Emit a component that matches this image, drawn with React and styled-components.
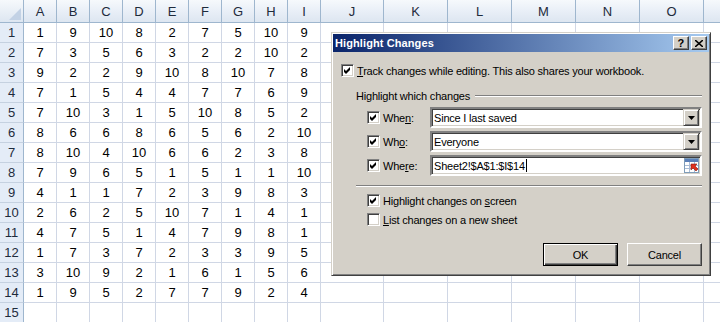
import React from "react";
import styled, { createGlobalStyle } from "styled-components";

const GlobalStyle = createGlobalStyle`
  html, body {
    margin: 0;
    padding: 0;
    background: #ffffff;
    overflow: hidden;
  }
  body {
    font-family: "Liberation Sans", Arial, sans-serif;
  }
`;

const Screen = styled.div`
  position: relative;
  width: 720px;
  height: 322px;
  overflow: hidden;
`;

// ---------- worksheet ----------

const Sheet = styled.div`
  display: grid;
  grid-template-columns: 24px repeat(9, 33px) 63px repeat(6, 64px);
  grid-template-rows: 23px repeat(15, 20px);
  font-family: "Liberation Sans", Arial, sans-serif;
  font-size: 13px;
  color: #000;
`;

const Corner = styled.div`
  position: relative;
  box-sizing: border-box;
  border-right: 1px solid #9eb6ce;
  border-bottom: 1px solid #9eb6ce;
  background: linear-gradient(#f6f9fc, #dde6f1);
  &::after {
    content: "";
    position: absolute;
    right: 2px;
    bottom: 2px;
    width: 0;
    height: 0;
    border-left: 12px solid transparent;
    border-bottom: 12px solid #c3d2e5;
  }
`;

const ColHead = styled.div`
  box-sizing: border-box;
  border-right: 1px solid #9eb6ce;
  border-bottom: 1px solid #9eb6ce;
  background: linear-gradient(#f6f9fc 0%, #e9eff7 50%, #dde6f1 100%);
  color: #1e2b3c;
  display: flex;
  align-items: center;
  justify-content: center;
`;

const RowHead = styled.div`
  box-sizing: border-box;
  border-right: 1px solid #9eb6ce;
  border-bottom: 1px solid #c5d1e0;
  background: #e4ecf7;
  color: #1e2b3c;
  display: flex;
  align-items: center;
  justify-content: center;
`;

const Cell = styled.div`
  box-sizing: border-box;
  border-right: 1px solid #d0d7e5;
  border-bottom: 1px solid #d0d7e5;
  display: flex;
  align-items: center;
  justify-content: center;
`;

// last column is only partly on screen, its letter falls outside the window
const columns = ["A", "B", "C", "D", "E", "F", "G", "H", "I", "J", "K", "L", "M", "N", "O", ""];

const data = [
  [1, 9, 10, 8, 2, 7, 5, 10, 9],
  [7, 3, 5, 6, 3, 2, 2, 10, 2],
  [9, 2, 2, 9, 10, 8, 10, 7, 8],
  [7, 1, 5, 4, 4, 7, 7, 6, 9],
  [7, 10, 3, 1, 5, 10, 8, 5, 2],
  [8, 6, 6, 8, 6, 5, 6, 2, 10],
  [8, 10, 4, 10, 6, 6, 2, 3, 8],
  [7, 9, 6, 5, 1, 5, 1, 1, 10],
  [4, 1, 1, 7, 2, 3, 9, 8, 3],
  [2, 6, 2, 5, 10, 7, 1, 4, 1],
  [4, 7, 5, 1, 4, 7, 9, 8, 1],
  [1, 7, 3, 7, 2, 3, 3, 9, 5],
  [3, 10, 9, 2, 1, 6, 1, 5, 6],
  [1, 9, 5, 2, 7, 7, 9, 2, 4],
  [],
];

// ---------- dialog (classic windows) ----------

const Dialog = styled.div`
  position: absolute;
  left: 331px;
  top: 32px;
  width: 380px;
  height: 244px;
  box-sizing: border-box;
  padding: 1px;
  background: #d4d0c8;
  border: 1px solid;
  border-color: #d4d0c8 #404040 #404040 #d4d0c8;
  box-shadow: inset 1px 1px #ffffff, inset -1px -1px #808080;
  font-family: "Liberation Sans", Arial, sans-serif;
  font-size: 11px;
  color: #000;
`;

const TitleBar = styled.div`
  height: 18px;
  display: flex;
  align-items: center;
  justify-content: space-between;
  padding: 0 2px;
  background: linear-gradient(to right, #0a246a, #a6caf0);
  color: #fff;
  font-weight: bold;
  font-size: 11px;
  letter-spacing: 0.1px;
`;

const CaptionButtons = styled.div`
  display: flex;
  gap: 2px;
`;

const CaptionButton = styled.div`
  width: 16px;
  height: 14px;
  box-sizing: border-box;
  background: #d4d0c8;
  border: 1px solid;
  border-color: #ffffff #404040 #404040 #ffffff;
  box-shadow: inset -1px -1px #808080;
  display: flex;
  align-items: center;
  justify-content: center;
  color: #000;
  font-weight: bold;
  font-size: 11px;
  line-height: 1;
`;

const Body = styled.div`
  display: flex;
  flex-direction: column;
  padding: 12px 7px 0 8px;
  letter-spacing: -0.2px;
`;

const Row = styled.div`
  display: flex;
  align-items: center;
  height: ${(p) => p.$h || 13}px;
  margin-top: ${(p) => p.$mt || 0}px;
  margin-left: ${(p) => p.$ml || 0}px;
  white-space: nowrap;
`;

const BoxFrame = styled.div`
  width: 13px;
  height: 13px;
  box-sizing: border-box;
  flex: none;
  background: #fff;
  border: 1px solid;
  border-color: #808080 #ffffff #ffffff #808080;
  box-shadow: inset 1px 1px #404040, inset -1px -1px #d4d0c8;
  display: flex;
  align-items: center;
  justify-content: center;
`;

const Label = styled.span`
  margin-left: 3px;
  width: ${(p) => (p.$w ? `${p.$w}px` : "auto")};
  flex: none;
`;

const GroupTitle = styled.span`
  margin-right: 5px;
`;

const Etched = styled.div`
  flex: 1;
  height: 0;
  border-top: 1px solid #808080;
  border-bottom: 1px solid #ffffff;
`;

const Separator = styled.div`
  margin-top: 9px;
  margin-left: 15px;
  border-top: 1px solid #808080;
  border-bottom: 1px solid #ffffff;
`;

const Field = styled.div`
  flex: 1;
  height: 21px;
  box-sizing: border-box;
  background: #fff;
  border: 2px solid;
  border-color: #808080 #ffffff #ffffff #808080;
  box-shadow: inset 1px 1px #404040, inset -1px -1px #d4d0c8;
  display: flex;
  align-items: center;
  padding-left: 2px;
  padding-right: 1px;
`;

const FieldText = styled.span`
  flex: 1;
  display: flex;
  align-items: center;
`;

const Caret = styled.span`
  display: inline-block;
  width: 1px;
  height: 13px;
  margin-left: 1px;
  background: #000;
`;

const DropButton = styled.div`
  width: 16px;
  height: 17px;
  box-sizing: border-box;
  background: #d4d0c8;
  border: 1px solid;
  border-color: #d4d0c8 #404040 #404040 #d4d0c8;
  box-shadow: inset 1px 1px #ffffff, inset -1px -1px #808080;
  display: flex;
  align-items: center;
  justify-content: center;
`;

const ButtonRow = styled.div`
  display: flex;
  justify-content: flex-end;
  gap: 9px;
  margin-top: 17px;
`;

const PushButton = styled.div`
  width: 75px;
  height: 23px;
  box-sizing: border-box;
  background: #d4d0c8;
  border: 1px solid;
  border-color: ${(p) => (p.$default ? "#000000" : "#ffffff #404040 #404040 #ffffff")};
  box-shadow: ${(p) =>
    p.$default
      ? "inset 1px 1px #ffffff, inset -1px -1px #404040, inset -2px -2px #808080"
      : "inset -1px -1px #808080"};
  display: flex;
  align-items: center;
  justify-content: center;
`;

const Check = () => (
  <svg width="9" height="9" viewBox="0 0 9 9">
    <path d="M1 3 L3 5 L7 1 L7 4 L3 8 L1 6 Z" fill="#000" />
  </svg>
);

const CheckBox = ({ checked }) => <BoxFrame>{checked && <Check />}</BoxFrame>;

const Arrow = () => (
  <svg width="7" height="4" viewBox="0 0 7 4">
    <path d="M0 0 H7 L3.5 4 Z" fill="#000" />
  </svg>
);

const CloseGlyph = () => (
  <svg width="8" height="7" viewBox="0 0 8 7">
    <path d="M0 0 L8 7 M8 0 L0 7" stroke="#000" strokeWidth="1.6" />
  </svg>
);

const RefIcon = () => (
  <svg width="15" height="15" viewBox="0 0 15 15">
    <rect x="0.5" y="0.5" width="14" height="14" fill="#ffffff" stroke="#7f9db9" />
    <rect x="1" y="1" width="13" height="3" fill="#5a7fb8" />
    <path d="M1 7.5 H14 M1 10.5 H14 M5.5 4 V14 M10.5 4 V14" stroke="#a9bcd6" strokeWidth="1" />
    <path d="M7 6 L13 6 L11 8 L14 11 L12 13 L9 10 L7 12 Z" fill="#e0301e" stroke="#8a1c10" strokeWidth="0.6" />
  </svg>
);

const ChoiceRow = ({ label, accel, rest, value, children }) => (
  <Row $h={21} $ml={26} $mt={3}>
    <CheckBox checked />
    <Label $w={47}>
      {label}
      <u>{accel}</u>
      {rest}
    </Label>
    <Field>
      <FieldText>{value}</FieldText>
      {children}
    </Field>
  </Row>
);

export default function App() {
  return (
    <>
      <GlobalStyle />
      <Screen>
        <Sheet>
          <Corner />
          {columns.map((c, i) => (
            <ColHead key={i}>{c}</ColHead>
          ))}
          {data.map((row, r) => (
            <React.Fragment key={r}>
              <RowHead>{r + 1}</RowHead>
              {columns.map((c, i) => (
                <Cell key={i}>{row[i] ?? ""}</Cell>
              ))}
            </React.Fragment>
          ))}
        </Sheet>

        <Dialog>
          <TitleBar>
            <span>Highlight Changes</span>
            <CaptionButtons>
              <CaptionButton>?</CaptionButton>
              <CaptionButton>
                <CloseGlyph />
              </CaptionButton>
            </CaptionButtons>
          </TitleBar>
          <Body>
            <Row>
              <CheckBox checked />
              <Label>
                <u>T</u>rack changes while editing. This also shares your workbook.
              </Label>
            </Row>
            <Row $mt={12} $ml={15}>
              <GroupTitle>Highlight which changes</GroupTitle>
              <Etched />
            </Row>
            <Row $h={21} $ml={26} $mt={5}>
              <CheckBox checked />
              <Label $w={47}>
                Whe<u>n</u>:
              </Label>
              <Field>
                <FieldText>Since I last saved</FieldText>
                <DropButton>
                  <Arrow />
                </DropButton>
              </Field>
            </Row>
            <ChoiceRow label="Wh" accel="o" rest=":" value="Everyone">
              <DropButton>
                <Arrow />
              </DropButton>
            </ChoiceRow>
            <ChoiceRow
              label="Whe"
              accel="r"
              rest="e:"
              value={
                <>
                  Sheet2!$A$1:$I$14
                  <Caret />
                </>
              }
            >
              <RefIcon />
            </ChoiceRow>
            <Separator />
            <Row $mt={7} $ml={26}>
              <CheckBox checked />
              <Label>
                Highlight changes on <u>s</u>creen
              </Label>
            </Row>
            <Row $mt={6} $ml={26}>
              <CheckBox />
              <Label>
                <u>L</u>ist changes on a new sheet
              </Label>
            </Row>
            <ButtonRow>
              <PushButton $default>OK</PushButton>
              <PushButton>Cancel</PushButton>
            </ButtonRow>
          </Body>
        </Dialog>
      </Screen>
    </>
  );
}
